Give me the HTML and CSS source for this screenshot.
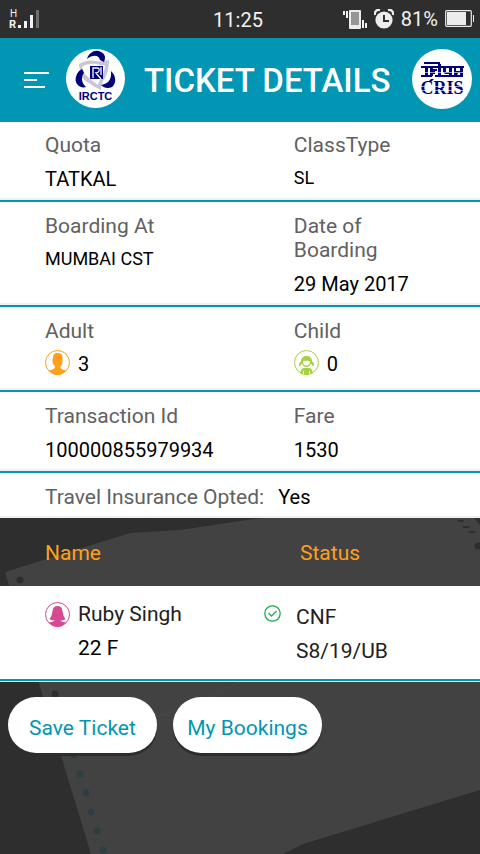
FILE: index.html
```html
<!DOCTYPE html>
<html lang="en">
<head>
<meta charset="utf-8">
<meta name="viewport" content="width=device-width, initial-scale=1">
<title>Ticket Details</title>
<link rel="stylesheet" href="styles.css">
</head>
<body>
<div class="statusbar">
  <svg class="signal" width="32" height="22" viewBox="0 0 32 22" aria-hidden="true">
    <text class="signal-h" x="1" y="9">H</text>
    <text class="signal-r" x="0" y="20">R</text>
    <path fill="#f2f2f2" d="M9 17h3v3H9zM15 13h3v7h-3zM21 7h3v13h-3z"/>
    <path fill="#6e6e6e" d="M27 2h3v18h-3z"/>
  </svg>
  <time class="clock">11:25</time>
  <div class="indicators">
    <svg width="24" height="20" viewBox="0 0 24 20" aria-hidden="true">
      <path fill="#f2f2f2" d="M0 2h2v4H0zM3 2h2v7H3zM19 11h2v8h-2zM22 14h2v5h-2z"/>
      <rect x="6" y="1" width="12" height="19" rx="1" fill="#ececec"/>
      <rect x="8" y="3" width="8" height="13" fill="#969696"/>
    </svg>
    <svg width="20" height="20" viewBox="0 0 20 20" aria-hidden="true">
      <circle cx="10" cy="11" r="8.6" fill="#ececec"/>
      <path d="M10 6v6h5" fill="none" stroke="#2e2e2e" stroke-width="2"/>
      <path d="M1 6a4 4 0 0 1 5-5M14 1a4 4 0 0 1 5 5" fill="none" stroke="#ececec" stroke-width="2.4"/>
    </svg>
    <span class="percent">81%</span>
    <svg width="30" height="18" viewBox="0 0 30 18" aria-hidden="true">
      <rect x=".7" y=".7" width="25.6" height="15.6" rx="1" fill="none" stroke="#ececec" stroke-width="1.2"/>
      <path fill="#ececec" d="M2 2h19v13H2zM28 5h1v7h-1z"/>
    </svg>
  </div>
</div>

<header class="appbar">
  <button class="menu" type="button" aria-label="Menu">
    <svg width="25" height="17" viewBox="0 0 25 17" aria-hidden="true"><path fill="#fff" d="M0 0h25v2H0zM0 7h13v2H0zM0 14h21v2H0z"/></svg>
  </button>
  <svg class="logo" width="60" height="60" viewBox="0 0 60 60" role="img" aria-label="IRCTC">
    <circle cx="29.5" cy="29.5" r="29.5" fill="#fff"/>
    <g fill="#c9c7d6">
      <path d="M13 15Q21 10 30 12Q37 13 43 11L42 16Q36 17 30 15Q22 14 16 18L20 28L17 25Q13 20 13 15Z"/>
      <path d="M43 11Q43 22 39 29Q35 34 35 41L31 38Q33 32 36 27Q39 22 39 14Z"/>
      <path d="M14 23Q20 25 24 30Q29 34 35 38V41Q28 38 23 34Q17 31 14 26Z"/>
    </g>
    <g fill="#00007b">
      <path d="M21 10C23 3 30 0 35 3C39 5 40 8 38 13L34 11C33 6 27 5 21 10Z"/>
      <path d="M16 20C10 23 8 31 11 35C13 38 17 39 20 38C15 34 15 27 18 24Z"/>
      <path d="M45 22C51 28 50 35 46 38C42 40 38 39 35 36C41 35 46 32 45 22Z"/>
      <rect x="24" y="17" width="13" height="13"/>
    </g>
    <path d="M27 29V19H31Q34 19 33 22Q32 24 30 24L35 30M35 18V26" fill="none" stroke="#fff" stroke-width="1.3"/>
    <text class="logo-irctc" x="29.5" y="51" text-anchor="middle">IRCTC</text>
  </svg>
  <h1 class="title">TICKET DETAILS</h1>
  <svg class="logo" width="60" height="60" viewBox="0 0 60 60" role="img" aria-label="CRIS">
    <circle cx="30" cy="30" r="30" fill="#fff"/>
    <g fill="#00007b">
      <path d="M12 13h16v2H12zM9 17h43v2H9z"/>
      <path d="M13 19h3v8h-3zM18 19h3v8h-3zM21 20h4v2h-2v3h-2zM26 15h3v12h-3zM31 19h3v4h3v-4h3v8h-3v-2h-4l-2-2zM42 19h2v3h4v-3h3v9h-3v-4h-2l-1 3h-3z"/>
      <path d="M9 26h11v2H9zM23 26h28v2H23zM16 33l3-3h3l-3 3z"/>
    </g>
    <text class="logo-cris" x="30" y="45" text-anchor="middle">CRIS</text>
    <path d="M8 23.500h44M8 37.500h44M8 41.500h44" stroke="#fff" stroke-width=".6"/>
  </svg>
</header>

<main class="content">
  <dl class="details">
    <div class="row">
      <div class="field"><dt>Quota</dt><dd>TATKAL</dd></div>
      <div class="field"><dt>ClassType</dt><dd class="small">SL</dd></div>
    </div>
    <div class="row">
      <div class="field"><dt>Boarding At</dt><dd class="small">MUMBAI CST</dd></div>
      <div class="field"><dt>Date of Boarding</dt><dd>29 May 2017</dd></div>
    </div>
    <div class="row row-count">
      <div class="field"><dt>Adult</dt>
        <dd class="count">
          <svg width="25" height="25" viewBox="0 0 25 25" aria-hidden="true">
            <circle cx="12.500" cy="12.500" r="12" fill="#fff" stroke="#ffa01c"/>
            <path fill="#ffa01c" d="M8 7Q8 3 12.500 3Q17.500 3 17.500 7V11Q17.500 15 15.500 16V18Q18 20 21 20.500Q17 25 12.500 25Q8 25 4 20.500Q7 20 9.800 18V16Q7.500 15 7.500 10Z"/>
          </svg>
          <span>3</span>
        </dd>
      </div>
      <div class="field"><dt>Child</dt>
        <dd class="count">
          <svg width="25" height="25" viewBox="0 0 25 25" aria-hidden="true">
            <circle cx="12.500" cy="12.500" r="12" fill="#fff" stroke="#a4d13f"/>
            <path fill="#a4d13f" d="M7 11.500Q7 6 12.500 6Q18 6 18 11.500Q20 12 20 16L18 15.500Q17.800 14 17 13.500Q15.500 17 12.500 17Q9.500 17 8 13.500Q7 14 7 15.500L5 16Q5 12 7 11.500Z"/>
            <path fill="#fff" d="M9 11.500L11 10.500L12 11.200L13 10.500L16 11.500Q16 15.500 12.500 15.500Q9 15.500 9 11.500Z"/>
            <path fill="#a4d13f" d="M8 18.500Q12.500 17 17 18.500L19 23Q15 25 12.500 25Q9 25 6 23Z"/>
            <path d="M9.500 21v3M15.500 21v3" stroke="#fff" stroke-width=".8"/>
          </svg>
          <span>0</span>
        </dd>
      </div>
    </div>
    <div class="row">
      <div class="field"><dt>Transaction Id</dt><dd>100000855979934</dd></div>
      <div class="field"><dt>Fare</dt><dd>1530</dd></div>
    </div>
    <div class="row row-inline"><dt>Travel Insurance Opted:</dt><dd>Yes</dd></div>
  </dl>

  <table class="passengers">
    <thead>
      <tr><th class="name" scope="col">Name</th><th class="status" scope="col">Status</th></tr>
    </thead>
    <tbody>
      <tr>
        <td class="name">
          <div class="person">
            <svg width="25" height="25" viewBox="0 0 25 25" aria-hidden="true">
              <circle cx="12.500" cy="12.500" r="12" fill="#fff" stroke="#d64a94"/>
              <path fill="#d64a94" d="M7.500 9Q8 4 12.500 4Q17 4 17.500 9Q18 14 20.500 17Q18 19 15 18.500Q17 20 21 20.500Q17 25 12.500 25Q8 25 4 20.500Q8 20 10 18.500Q7 19 4.500 17Q7 14 7.500 9Z"/>
            </svg>
            <div class="lines"><span>Ruby Singh</span><span class="strong">22 F</span></div>
          </div>
        </td>
        <td class="status">
          <div class="booking">
            <svg width="17" height="17" viewBox="0 0 17 17" aria-hidden="true">
              <circle cx="8.500" cy="8.500" r="7.700" fill="none" stroke="#27a757" stroke-width="1.300"/>
              <path d="M4.500 8L7.500 11L12.500 6" fill="none" stroke="#27a757" stroke-width="1.300"/>
            </svg>
            <div class="lines"><span>CNF</span><span>S8/19/UB</span></div>
          </div>
        </td>
      </tr>
    </tbody>
  </table>

  <div class="actions">
    <button class="pill" type="button">Save Ticket</button>
    <button class="pill" type="button">My Bookings</button>
  </div>

  <svg class="backdrop" viewBox="0 0 480 336" preserveAspectRatio="xMidYMax slice" aria-hidden="true">
    <path fill="#424242" d="M5 54L130 15L180 12L240 3L262 0H474L480 7V272L303 326L283 336H91Z"/>
    <path d="M156 199L185 190L240 164" fill="none" stroke="#484848"/>
    <g fill="#2e2e2e">
      <circle cx="20" cy="62" r="3.500"/><circle cx="55" cy="176" r="3.500"/><circle cx="478" cy="28" r="3.500"/>
      <path d="M457 2h6l1 2h-5zM463 8h6l1 2h-7zM468 13h6l2 2h-6z"/>
    </g>
    <g fill="#2b3f43">
      <circle cx="74" cy="237" r="3.500"/><circle cx="80" cy="256" r="3.500"/><circle cx="86" cy="275" r="3.500"/>
      <circle cx="91" cy="294" r="3.500"/><circle cx="97" cy="313" r="3.500"/><circle cx="103" cy="332" r="3.500"/>
    </g>
  </svg>
</main>
</body>
</html>
```
FILE: styles.css
```css
* {
  box-sizing: border-box;
}

body {
  margin: 0;
  min-height: 100vh;
  display: flex;
  flex-direction: column;
  background: #2e2e2e;
  color: #000;
  font: 20px/24px Roboto, "Liberation Sans", sans-serif;
}

svg {
  display: block;
  flex: none;
}

.statusbar {
  display: grid;
  grid-template-columns: 1fr auto 1fr;
  align-items: center;
  min-height: 38px;
  padding: 0 5px 0 9px;
  color: #f2f2f2;
}

.clock {
  margin-right: 8px;
  padding-top: 2px;
}

.signal-h {
  font: 10px Roboto, sans-serif;
  fill: #f2f2f2;
}

.signal-r {
  font: bold 11px Roboto, sans-serif;
  fill: #f2f2f2;
}

.indicators {
  display: flex;
  justify-content: flex-end;
  align-items: center;
  gap: 7px;
}

.appbar {
  display: flex;
  align-items: center;
  min-height: 84px;
  padding: 0 8px 2px 24px;
  background: #0096b4;
  color: #fff;
}

.menu {
  margin: 0 17px 0 0;
  padding: 2px 0 0;
  border: 0;
  background: none;
}

.title {
  flex: 1;
  margin: 0 0 0 18px;
  padding-top: 4px;
  font-size: 33px;
  line-height: 40px;
  font-weight: 500;
  white-space: nowrap;
}

.logo-irctc {
  font: bold 11px "Liberation Sans", sans-serif;
  fill: #00007b;
}

.logo-cris {
  font: bold 18px "Liberation Serif", serif;
  fill: #00007b;
}

.content {
  position: relative;
  z-index: 0;
  flex: 1;
}

.backdrop {
  position: absolute;
  z-index: -1;
  left: 0;
  bottom: 0;
  width: 100%;
}

.details {
  margin: 0;
  background: #fff;
}

.row {
  display: grid;
  grid-template-columns: 63% 37%;
  padding: 12px 40px 9px 45px;
  border-bottom: 2px solid #0096b4;
  box-shadow: inset 0 -2px #f0f0f0;
}

.row:first-child {
  padding-top: 11px;
}

.row-count {
  padding-bottom: 14px;
}

.row-inline {
  display: flex;
  gap: 14px;
  border-bottom: 0;
}

dt {
  color: #616161;
  font-size: 21px;
}

dd {
  margin: 0;
}

.field dd {
  margin-top: 10px;
}

.field .small {
  font-size: 18px;
  line-height: 22px;
}

.field .count {
  display: flex;
  align-items: flex-start;
  gap: 8px;
  margin-top: 7px;
}

.count span {
  padding-top: 2px;
}

.passengers {
  width: 100%;
  border-collapse: separate;
  border-spacing: 0;
  table-layout: fixed;
  font-size: 21px;
}

.passengers th {
  height: 68px;
  padding: 2px 0 0;
  color: #ffa01c;
  font-weight: 400;
  text-align: left;
}

.name {
  width: 55%;
}

.passengers .name {
  padding-left: 45px;
}

th.status {
  width: 45%;
}

.passengers th.status {
  padding-left: 36px;
}

.passengers tbody {
  background: #fff;
  color: #212121;
}

.passengers td {
  height: 96px;
  padding: 16px 0 0;
  border-bottom: 1px solid #e8f2f4;
  box-shadow: inset 0 -2px #0096b4;
  vertical-align: top;
}

.person {
  display: flex;
  gap: 8px;
}

.booking {
  display: flex;
  gap: 15px;
  padding-top: 3px;
}

.lines {
  display: flex;
  flex-direction: column;
  gap: 10px;
}

.strong {
  color: #000;
}

.actions {
  display: flex;
  gap: 16px;
  padding: 15px 8px;
}

.pill {
  min-width: 149px;
  height: 56px;
  padding: 6px 14px 0;
  border: 0;
  border-radius: 28px;
  background: #fff;
  box-shadow: 0 3px #2d2d2d;
  color: #0096b4;
  font: 21px/24px Roboto, "Liberation Sans", sans-serif;
  white-space: nowrap;
}
```
